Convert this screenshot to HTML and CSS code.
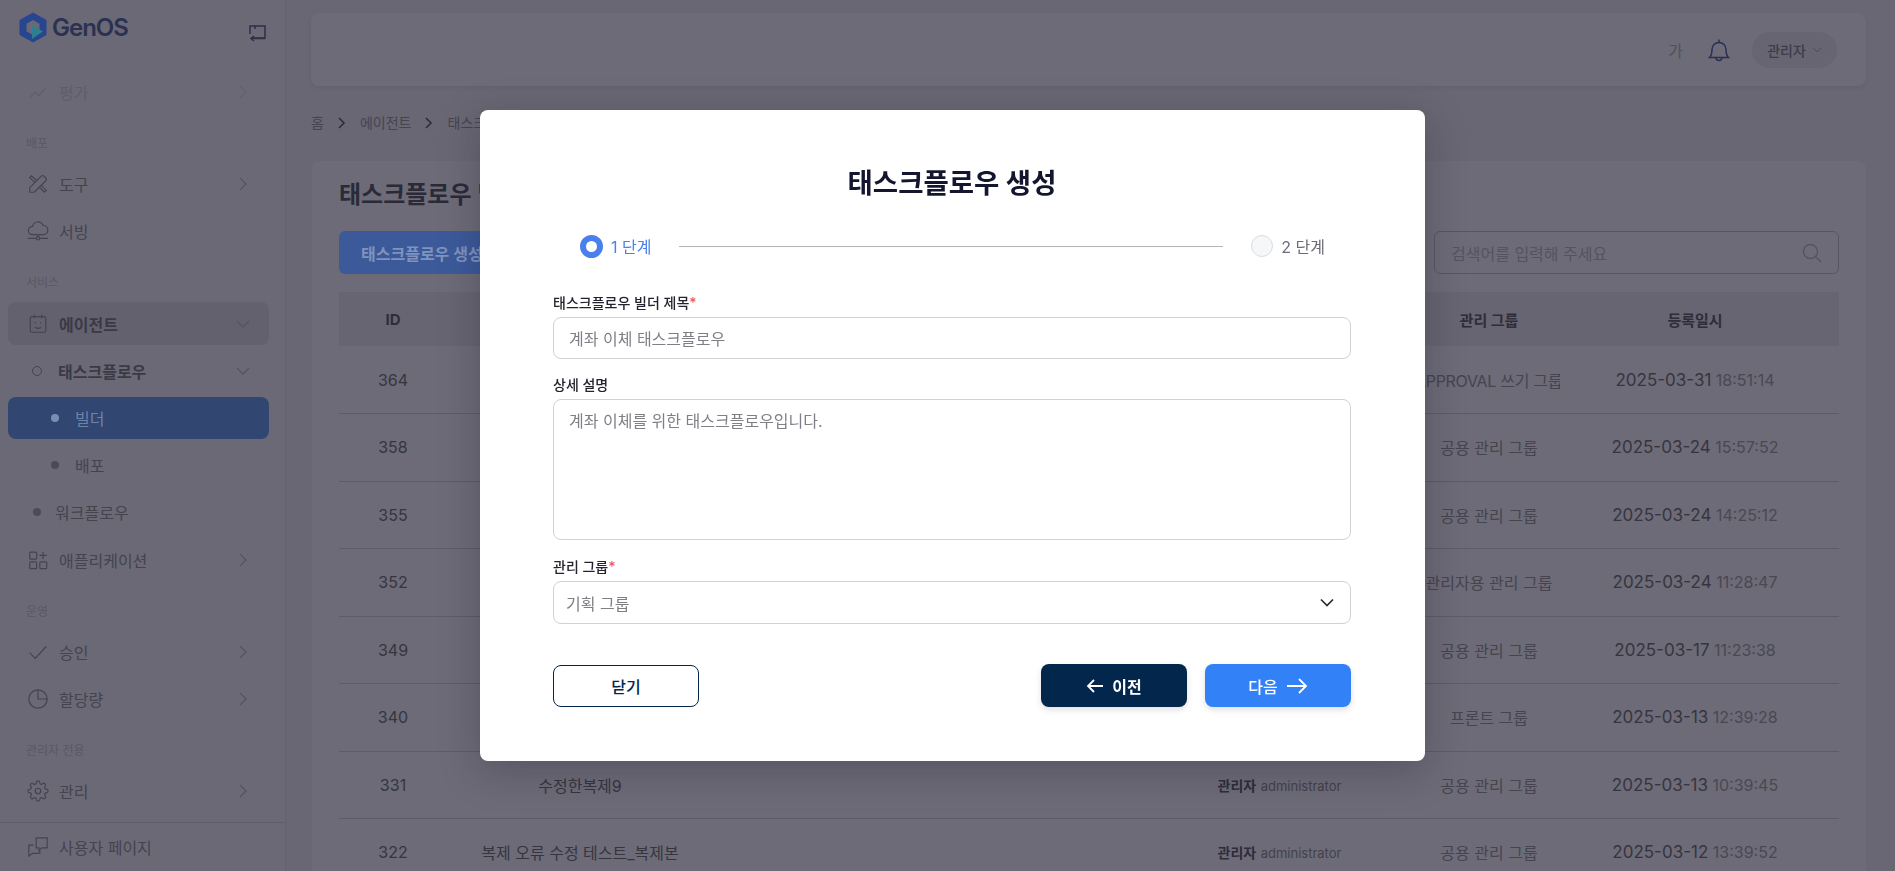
FILE: index.html
```html
<!DOCTYPE html>
<html lang="ko">
<head>
<meta charset="UTF-8">
<title>GenOS 태스크플로우 빌더</title>
<link rel="stylesheet" href="styles.css">
</head>
<body>

<svg class="sprite" width="0" height="0">
  <symbol id="chev-r" viewBox="0 0 12 16"><path d="M3 2l6 6-6 6" fill="none" stroke="currentColor" stroke-width="1.3"/></symbol>
  <symbol id="chev-d" viewBox="0 0 16 12"><path d="M2 3l6 6 6-6" fill="none" stroke="currentColor" stroke-width="1.3"/></symbol>
  <symbol id="crumb" viewBox="0 0 10 14"><path d="M2 2l5 5-5 5" fill="none" stroke="currentColor" stroke-width="1.6"/></symbol>
</svg>

<div class="app">
  <aside class="sidebar">
    <div class="logo-row">
      <div class="logo">
        <svg width="28" height="31" viewBox="0 0 28 31">
          <path d="M14 1l13 7.200v14.600L14 30 1 22.800V8.200z" fill="#27468f" stroke="#27468f" stroke-linejoin="round"/>
          <path d="M14 8l6.500 3.700v7.600L14 23l-6.500-3.700v-7.600z" fill="#6b6975"/>
          <path d="M13 13l11 6.500L13 27z" fill="#2f7f8f"/>
        </svg>
        <span class="logo-text">GenOS</span>
      </div>
      <svg class="collapse" width="20" height="20" viewBox="0 0 20 20" fill="none" stroke="currentColor" stroke-width="1.500">
        <path d="M3 11V3h15v12H5"/><path d="M8 3v3"/><path d="M7 13l-3 2.500L7 18"/><path d="M4 15.500h14"/>
      </svg>
    </div>

    <nav class="nav">
      <div class="nav-item faded">
        <svg class="ico" viewBox="0 0 24 24"><path d="M3 18l6-6 4 4 8-9"/></svg>
        <span class="nav-text">평가</span>
        <svg class="chev"><use href="#chev-r"/></svg>
      </div>
      <div class="nav-label">배포</div>
      <div class="nav-item">
        <svg class="ico" viewBox="0 0 24 24"><path d="M3 21v-5L15.500 3.500a2 2 0 0 1 3 0l2 2a2 2 0 0 1 0 3L8 21z"/><path d="M8.500 10.500L3 5l2-2 5.500 5.500M13.500 15.500L19 21l2-2-5.500-5.500"/></svg>
        <span class="nav-text">도구</span>
        <svg class="chev"><use href="#chev-r"/></svg>
      </div>
      <div class="nav-item">
        <svg class="ico" viewBox="0 0 24 24"><path d="M6 16a4.500 4.500 0 0 1 0-9 6 6 0 0 1 11.500-1A5 5 0 0 1 18 16H6z"/><circle cx="12" cy="20" r="1.800"/><path d="M1 20h9M14 20h9M12 16v2"/></svg>
        <span class="nav-text">서빙</span>
      </div>
      <div class="nav-label second">서비스</div>
      <div class="nav-item open">
        <svg class="ico" viewBox="0 0 24 24"><rect x="3.500" y="4" width="17" height="17" rx="2"/><path d="M8 1.500V6M16 1.500V6M8.500 15.500c2 1.500 5 1.500 7 0"/><path d="M9 10v1.500M15 10v1.500"/></svg>
        <span class="nav-text strong">에이전트</span>
        <svg class="chev down"><use href="#chev-d"/></svg>
      </div>
      <div class="nav-item">
        <span class="ring"></span>
        <span class="nav-text strong">태스크플로우</span>
        <svg class="chev down"><use href="#chev-d"/></svg>
      </div>
      <div class="nav-item sub active">
        <span class="dot"></span>
        <span class="nav-text">빌더</span>
      </div>
      <div class="nav-item sub">
        <span class="dot"></span>
        <span class="nav-text">배포</span>
      </div>
      <div class="nav-item flat">
        <span class="dot"></span>
        <span class="nav-text">워크플로우</span>
      </div>
      <div class="nav-item apps">
        <svg class="ico" viewBox="0 0 24 24"><rect x="3" y="3.500" width="7.500" height="7.500" rx="1"/><rect x="3" y="14" width="7.500" height="7.500" rx="1"/><rect x="14" y="14" width="7.500" height="7.500" rx="1"/><path d="M17.500 3v8M13.500 7h8"/></svg>
        <span class="nav-text">애플리케이션</span>
        <svg class="chev"><use href="#chev-r"/></svg>
      </div>
      <div class="nav-label">운영</div>
      <div class="nav-item">
        <svg class="ico" viewBox="0 0 24 24"><path d="M3 13l6 6L21 6"/></svg>
        <span class="nav-text">승인</span>
        <svg class="chev"><use href="#chev-r"/></svg>
      </div>
      <div class="nav-item">
        <svg class="ico" viewBox="0 0 24 24"><circle cx="12" cy="12" r="10"/><path d="M12 2v10h10"/></svg>
        <span class="nav-text">할당량</span>
        <svg class="chev"><use href="#chev-r"/></svg>
      </div>
      <div class="nav-label">관리자 전용</div>
      <div class="nav-item">
        <svg class="ico" viewBox="0 0 24 24"><circle cx="12" cy="12" r="3"/><path d="M19.400 15a1.650 1.650 0 0 0 .33 1.820l.06.06a2 2 0 0 1-2.830 2.830l-.06-.06a1.650 1.650 0 0 0-1.820-.33 1.650 1.650 0 0 0-1 1.510V21a2 2 0 0 1-4 0v-.09A1.650 1.650 0 0 0 9 19.400a1.650 1.650 0 0 0-1.820.33l-.06.06a2 2 0 0 1-2.830-2.830l.06-.06a1.650 1.650 0 0 0 .33-1.820 1.650 1.650 0 0 0-1.510-1H3a2 2 0 0 1 0-4h.09A1.650 1.650 0 0 0 4.600 9a1.650 1.650 0 0 0-.33-1.820l-.06-.06a2 2 0 0 1 2.830-2.830l.06.06a1.650 1.650 0 0 0 1.820.33H9a1.650 1.650 0 0 0 1-1.510V3a2 2 0 0 1 4 0v.09a1.650 1.650 0 0 0 1 1.510 1.650 1.650 0 0 0 1.820-.33l.06-.06a2 2 0 0 1 2.830 2.830l-.06.06a1.650 1.650 0 0 0-.33 1.820V9a1.650 1.650 0 0 0 1.510 1H21a2 2 0 0 1 0 4h-.09a1.650 1.650 0 0 0-1.510 1z"/></svg>
        <span class="nav-text">관리</span>
        <svg class="chev"><use href="#chev-r"/></svg>
      </div>
    </nav>

    <div class="user-page">
      <svg class="ico" viewBox="0 0 24 24"><path d="M10 2h12v11h-6l-3 3v-3h-3z"/><path d="M7 10H2v12l4-3h8v-3"/></svg>
      <span class="nav-text">사용자 페이지</span>
    </div>
  </aside>

  <main class="main">
    <header class="topbar">
      <span class="font-size">가</span>
      <svg class="bell" width="22" height="24" viewBox="0 0 22 24" fill="none" stroke="currentColor" stroke-width="1.500">
        <path d="M1.500 19.500h19c-2-2-2.500-3.500-2.500-8 0-4-3-7-7-7s-7 3-7 7c0 4.500-.5 6-2.500 8z"/><path d="M11 1.500v3M8 19.500a3 3 0 0 0 6 0"/>
      </svg>
      <div class="user-pill">관리자 <svg class="pill-chev"><use href="#chev-d"/></svg></div>
    </header>

    <div class="breadcrumb">
      <span>홈</span>
      <svg class="crumb-sep"><use href="#crumb"/></svg>
      <span>에이전트</span>
      <svg class="crumb-sep"><use href="#crumb"/></svg>
      <span>태스크플로우</span>
    </div>

    <section class="card">
      <h2 class="page-title">태스크플로우 빌더</h2>
      <div class="toolbar">
        <button class="create-btn" type="button">태스크플로우 생성</button>
        <div class="search">
          <span>검색어를 입력해 주세요</span>
          <svg width="20" height="20" viewBox="0 0 20 20" fill="none" stroke="currentColor" stroke-width="1.300"><circle cx="8.500" cy="8.500" r="7"/><path d="M13.500 13.500L19 19"/></svg>
        </div>
      </div>

      <table class="list">
        <colgroup>
          <col class="c-id"><col class="c-name"><col class="c-mid"><col class="c-author"><col class="c-group"><col class="c-date"><col>
        </colgroup>
        <thead>
          <tr><th>ID</th><th></th><th></th><th></th><th>관리 그룹</th><th>등록일시</th><th></th></tr>
        </thead>
        <tbody>
          <tr><td>364</td><td></td><td></td><td></td><td><div class="group clipped">APPROVAL 쓰기 그룹</div></td><td><span class="date">2025-03-31</span> <span class="time">18:51:14</span></td><td></td></tr>
          <tr><td>358</td><td></td><td></td><td></td><td><div class="group">공용 관리 그룹</div></td><td><span class="date">2025-03-24</span> <span class="time">15:57:52</span></td><td></td></tr>
          <tr><td>355</td><td></td><td></td><td></td><td><div class="group">공용 관리 그룹</div></td><td><span class="date">2025-03-24</span> <span class="time">14:25:12</span></td><td></td></tr>
          <tr><td>352</td><td></td><td></td><td></td><td><div class="group">관리자용 관리 그룹</div></td><td><span class="date">2025-03-24</span> <span class="time">11:28:47</span></td><td></td></tr>
          <tr><td>349</td><td></td><td></td><td></td><td><div class="group">공용 관리 그룹</div></td><td><span class="date">2025-03-17</span> <span class="time">11:23:38</span></td><td></td></tr>
          <tr><td>340</td><td></td><td></td><td></td><td><div class="group">프론트 그룹</div></td><td><span class="date">2025-03-13</span> <span class="time">12:39:28</span></td><td></td></tr>
          <tr><td>331</td><td>수정한복제9</td><td></td><td><b>관리자</b> <span class="login">administrator</span></td><td><div class="group">공용 관리 그룹</div></td><td><span class="date">2025-03-13</span> <span class="time">10:39:45</span></td><td></td></tr>
          <tr><td>322</td><td>복제 오류 수정 테스트_복제본</td><td></td><td><b>관리자</b> <span class="login">administrator</span></td><td><div class="group">공용 관리 그룹</div></td><td><span class="date">2025-03-12</span> <span class="time">13:39:52</span></td><td></td></tr>
        </tbody>
      </table>
    </section>
  </main>
</div>

<div class="backdrop">
  <form class="modal">
    <h1 class="modal-title">태스크플로우 생성</h1>

    <div class="stepper">
      <span class="step-circle current"></span>
      <span class="step-text current">1 단계</span>
      <span class="step-line"></span>
      <span class="step-circle"></span>
      <span class="step-text">2 단계</span>
    </div>

    <label class="field-label">태스크플로우 빌더 제목<span class="req">*</span></label>
    <div class="input">계좌 이체 태스크플로우</div>

    <label class="field-label">상세 설명</label>
    <div class="input textarea">계좌 이체를 위한 태스크플로우입니다.</div>

    <label class="field-label">관리 그룹<span class="req">*</span></label>
    <div class="input select">
      <span>기획 그룹</span>
      <svg width="16" height="12" viewBox="0 0 16 12" fill="none" stroke="currentColor" stroke-width="1.700"><path d="M2 2.500l6 6 6-6"/></svg>
    </div>

    <div class="actions">
      <button class="btn ghost" type="button">닫기</button>
      <div class="actions-right">
        <button class="btn navy" type="button">
          <svg width="18" height="14" viewBox="0 0 18 14" fill="none" stroke="currentColor" stroke-width="1.800"><path d="M17 7H2M8 1L2 7l6 6"/></svg>
          이전
        </button>
        <button class="btn blue" type="button">
          다음
          <svg width="22" height="16" viewBox="0 0 22 16" fill="none" stroke="currentColor" stroke-width="1.800"><path d="M1 8h19M13 1l7 7-7 7"/></svg>
        </button>
      </div>
    </div>
  </form>
</div>

</body>
</html>
```

FILE: styles.css
```css
* { box-sizing: border-box; }
html, body {
    margin: 0;
    height: 100%;
    overflow: hidden;
}
body {
    font-family: Inter, "Noto Sans CJK KR", sans-serif;
    font-size: 16px;
    color: #33323f;
    background: #696773;
}
.sprite { position: absolute; }
.app {
    display: flex;
    height: 100vh;
}

/* sidebar */
.sidebar {
    width: 286px;
    flex: none;
    background: #6b6975;
    border-right: 1px solid #64626e;
    display: flex;
    flex-direction: column;
}
.logo-row {
    height: 68px;
    flex: none;
    padding: 12px 18px 0 19px;
    display: flex;
    justify-content: space-between;
    align-items: flex-start;
}
.logo {
    display: flex;
    align-items: center;
    gap: 5px;
}
.logo-text {
    font-size: 24px;
    font-weight: 600;
    letter-spacing: -1px;
    color: #2b3152;
}
.collapse {
    color: #2e2f48;
    margin-top: 11px;
}
.nav { flex: none; }
.nav-item {
    height: 47px;
    margin: 0 16px 0 8px;
    padding: 0 20px 0 19px;
    display: flex;
    align-items: center;
    color: #44434f;
    border-radius: 8px;
}
.nav-item.faded { opacity: .3; }
.nav-item.apps { margin-top: 1px; }
.nav-item.open {
    height: 43px;
    margin-top: 2px;
    margin-bottom: 2px;
    background: #63616d;
}
.nav-item.sub {
    height: 42px;
    margin-top: 3px;
    margin-bottom: 2px;
    padding-left: 43px;
}
.nav-item.sub + .nav-item.sub {
    height: 47px;
    margin-top: 0;
    margin-bottom: 0;
}
.nav-item.sub .dot { margin-right: 16px; }
.nav-item.active {
    background: #324672;
    color: #6f83a9;
}
.nav-item.active .dot { background: #7a8db3; }
.nav-item.flat { padding-left: 25px; }
.nav-item.flat .dot { margin-right: 14px; }
.nav-label {
    height: 45px;
    padding: 21px 0 0 26px;
    font-size: 12px;
    line-height: 16px;
    color: #5a5864;
}
.nav-label.second { height: 46px; }
.ico {
    width: 22px;
    height: 22px;
    flex: none;
    margin-right: 10px;
    fill: none;
    stroke: currentColor;
    stroke-width: 1.3;
}
.nav-text {
    flex: 1;
    white-space: nowrap;
}
.nav-text.strong {
    font-weight: 600;
    color: #3a3946;
}
.chev {
    width: 12px;
    height: 16px;
    flex: none;
    color: #55535f;
}
.chev.down {
    width: 16px;
    height: 12px;
    margin-right: -2px;
}
.ring {
    width: 10px;
    height: 10px;
    margin: 0 16px 0 5px;
    border: 1.3px solid #44434f;
    border-radius: 50%;
    flex: none;
}
.dot {
    width: 8px;
    height: 8px;
    border-radius: 50%;
    background: #4c4a57;
    flex: none;
}
.user-page {
    margin-top: 8px;
    height: 52px;
    border-top: 1px solid #605e6a;
    padding: 0 0 0 27px;
    display: flex;
    align-items: center;
    color: #44434f;
}

/* page */
.main {
    flex: 1;
    min-width: 0;
    padding: 13px 29px 0 25px;
}
.topbar {
    height: 73px;
    background: #6d6b77;
    border-radius: 8px;
    box-shadow: 0 2px 5px rgba(0, 0, 0, .06);
    display: flex;
    align-items: center;
    justify-content: flex-end;
    padding-right: 29px;
}
.font-size {
    color: #51505b;
    margin-right: 25px;
}
.bell {
    color: #2b2f55;
    margin-right: 22px;
}
.user-pill {
    width: 85px;
    height: 36px;
    border-radius: 18px;
    background: #676571;
    font-size: 14px;
    font-weight: 500;
    color: #3d3c49;
    display: flex;
    align-items: center;
    justify-content: center;
    gap: 6px;
}
.pill-chev {
    width: 10px;
    height: 8px;
    color: #44434f;
}
.breadcrumb {
    height: 75px;
    padding-bottom: 3px;
    display: flex;
    align-items: center;
    font-size: 14px;
    color: #454450;
}
.crumb-sep {
    width: 10px;
    height: 14px;
    margin: 2px 13px 0;
    color: #2d2c38;
}
.card {
    height: 720px;
    padding: 17px 27px 0;
    margin-left: 1px;
    background: #6d6b77;
    border-radius: 8px;
}
.page-title {
    margin: 0;
    font-size: 24px;
    line-height: 34px;
    font-weight: 700;
    color: #2b2a38;
}
.toolbar {
    margin-top: 19px;
    display: flex;
    justify-content: space-between;
}
.create-btn {
    height: 43px;
    width: 190px;
    padding: 0 22px;
    border: 0;
    border-radius: 6px;
    background: #3c5a9a;
    color: #7f93bd;
    font: 600 16px Inter, "Noto Sans CJK KR", sans-serif;
    text-align: left;
}
.search {
    width: 405px;
    height: 43px;
    border: 1px solid #585662;
    border-radius: 6px;
    padding: 0 16px;
    display: flex;
    align-items: center;
    justify-content: space-between;
    color: #55535f;
}
.list {
    width: 100%;
    margin-top: 18px;
    table-layout: fixed;
    border-collapse: collapse;
}
.c-id { width: 108px; }
.c-name { width: 266px; }
.c-mid { width: 447px; }
.c-author { width: 239px; }
.c-group { width: 180px; }
.c-date { width: 232px; }
.list th {
    height: 54px;
    background: #676571;
    font-size: 15px;
    font-weight: 700;
    color: #2e2d3a;
    text-align: center;
}
.list td {
    height: 67.5px;
    padding: 0;
    border-bottom: 1px solid #5d5b67;
    text-align: center;
    color: #36353f;
    white-space: nowrap;
}
.list td b {
    font-size: 14px;
    font-weight: 700;
    color: #2e2d3a;
}
.login {
    font-size: 13px;
    color: #42414d;
}
.group {
    width: 142px;
    margin: 0 auto;
    overflow: hidden;
    color: #45444f;
}
.group.clipped {
    width: 145px;
    margin-left: 16px;
    letter-spacing: -.3px;
}
.date { font-size: 17px; }
.time {
    font-size: 16px;
    color: #494853;
}

/* modal */
.backdrop {
    position: fixed;
    inset: 0;
    padding-left: 10px;
    display: flex;
    align-items: center;
    justify-content: center;
}
.modal {
    width: 945px;
    height: 651px;
    padding: 54px 74px 0 73px;
    background: #fff;
    border-radius: 8px;
    box-shadow: 0 10px 40px rgba(20, 16, 36, .25);
}
.modal-title {
    margin: 0;
    font-size: 27.5px;
    line-height: 38px;
    font-weight: 700;
    text-align: center;
    color: #14162f;
}
.stepper {
    margin-top: 32px;
    padding: 0 26px 0 27px;
    height: 24px;
    display: flex;
    align-items: center;
}
.step-circle {
    width: 22px;
    height: 22px;
    border: 1px solid #d8dce2;
    background: #f6f7f9;
    border-radius: 50%;
    flex: none;
}
.step-circle.current {
    width: 23px;
    height: 23px;
    border: 6px solid #4a80ee;
    background: #fff;
}
.step-text {
    margin-left: 8px;
    color: #6c6b77;
}
.step-text.current { color: #4a80ee; }
.step-line {
    flex: 1;
    height: 1px;
    margin: 0 28px 0 28px;
    background: #b4b4b8;
}
.field-label {
    display: block;
    margin-top: 16px;
    font-size: 14px;
    line-height: 20px;
    font-weight: 500;
    color: #23232f;
}
.stepper + .field-label { margin-top: 35px; }
.req { color: #f0545c; }
.input {
    height: 42px;
    margin-top: 4px;
    padding: 0 15px;
    border: 1px solid #d2d2d6;
    border-radius: 8px;
    display: flex;
    align-items: center;
    color: #7f7f86;
}
.input.textarea {
    height: 141px;
    align-items: flex-start;
    padding-top: 8px;
}
.input.textarea + .field-label { margin-top: 17px; }
.input.select {
    height: 43px;
    padding: 0 15px 0 12px;
    justify-content: space-between;
}
.input.select svg { color: #2b2b33; }
.actions {
    margin-top: 40px;
    display: flex;
    justify-content: space-between;
    align-items: center;
}
.actions-right {
    display: flex;
    gap: 18px;
}
.btn {
    width: 146px;
    height: 43px;
    border: 0;
    border-radius: 8px;
    font: 600 16px Inter, "Noto Sans CJK KR", sans-serif;
    display: flex;
    align-items: center;
    justify-content: center;
    gap: 8px;
}
.btn.ghost {
    height: 42px;
    background: #fff;
    border: 1.5px solid #03264d;
    color: #03264d;
    font-weight: 500;
}
.btn.navy {
    background: #03264d;
    color: #fff;
    box-shadow: 0 3px 6px rgba(0, 0, 0, .12);
}
.btn.blue {
    background: #3381f6;
    color: #fff;
    font-weight: 500;
    box-shadow: 0 3px 6px rgba(0, 0, 0, .12);
}
```
